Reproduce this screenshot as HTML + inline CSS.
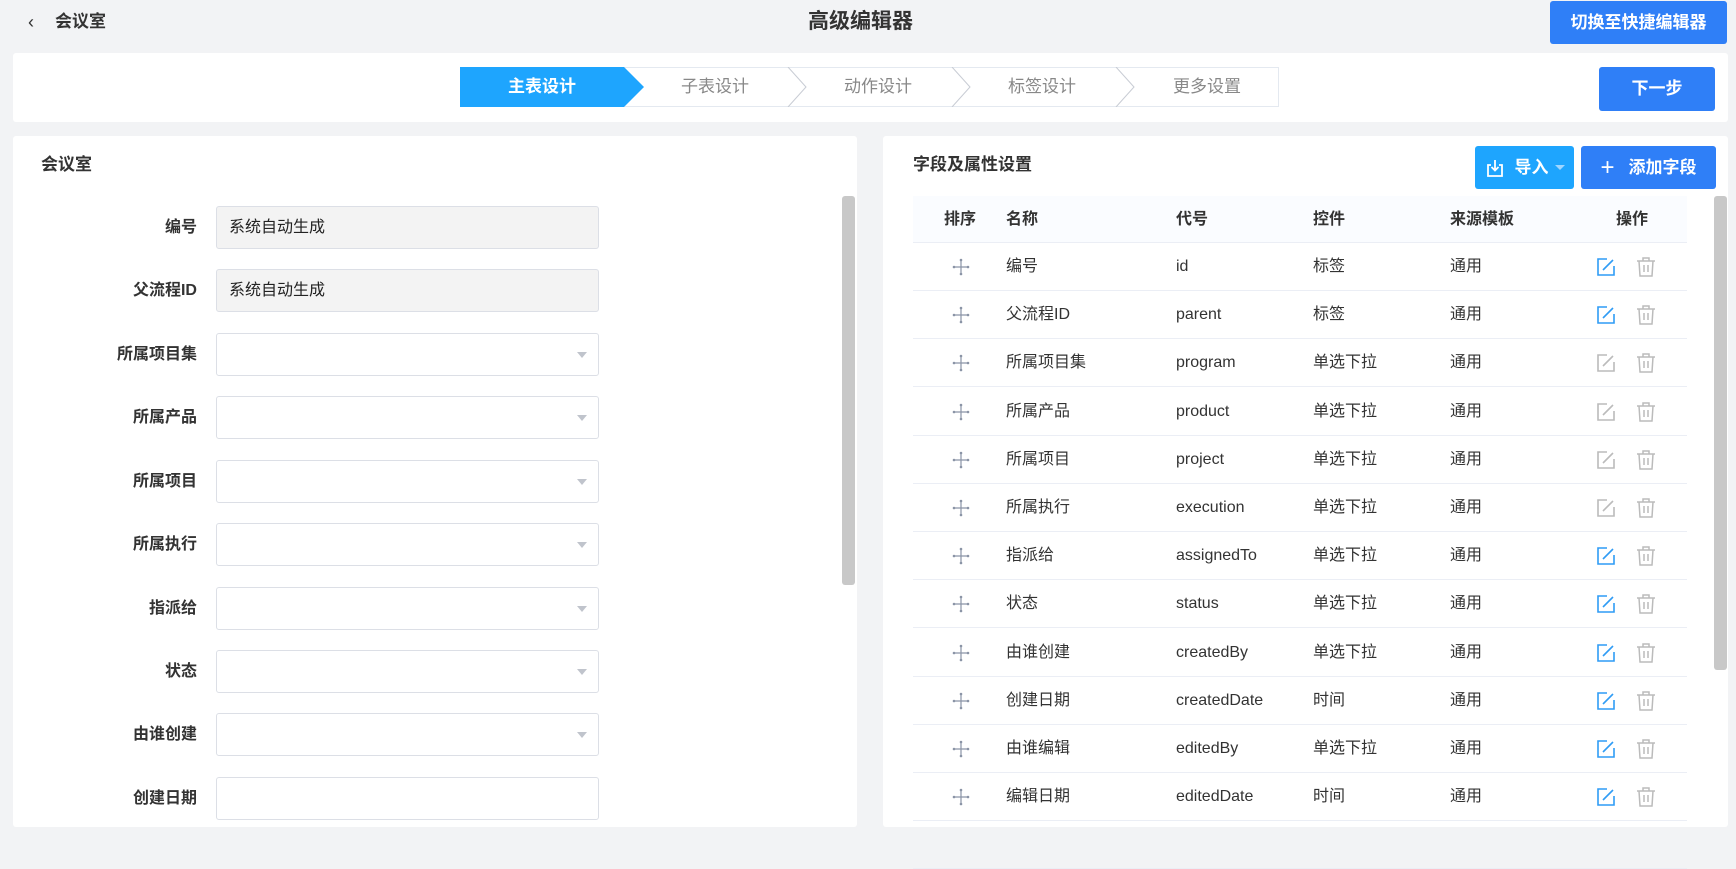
<!DOCTYPE html>
<html><head><meta charset="utf-8"><style>
*{box-sizing:border-box;margin:0;padding:0}
body{width:1736px;height:845px;background:#f2f3f5;font-family:"Liberation Sans","Noto Sans CJK SC",sans-serif;color:#333;position:relative;overflow:hidden;font-size:16px;line-height:20px}
.abs{position:absolute}
.card{position:absolute;background:#fff;border-radius:3px}
.btn{position:absolute;background:#2f7ff7;color:#fff;border-radius:3px;font-size:17px;font-weight:bold;display:flex;align-items:center;justify-content:center}
.lbl{position:absolute;left:47px;width:150px;text-align:right;font-weight:bold;font-size:16px;color:#333;height:43px;line-height:43px}
.inp{position:absolute;left:216px;width:383px;height:43px;border:1px solid #dcdfe6;border-radius:3px;background:#fff}
.inp.ro{background:#f3f3f3}
.inp span{position:absolute;left:12px;top:0;line-height:41px;font-size:16px;color:#222}
.inp i{position:absolute;right:11px;top:18px;width:0;height:0;border-left:5px solid transparent;border-right:5px solid transparent;border-top:6px solid #c0c4cc}
.row{position:absolute;left:913px;width:774px;height:48px;border-bottom:1px solid #ebeef5;font-size:16px;color:#333}
.row div{position:absolute;top:0;line-height:47px}
.step{position:absolute;top:67px;line-height:40px;font-size:17px;color:#888}
</style></head><body>
<div class="abs" style="left:28px;top:12px;font-size:18px;color:#333">‹</div>
<div class="abs" style="left:55px;top:12px;font-size:17px;font-weight:bold">会议室</div>
<div class="abs" style="left:808px;top:10px;font-size:21px;line-height:24px;font-weight:bold;color:#333">高级编辑器</div>
<div class="btn" style="left:1550px;top:1px;width:177px;height:43px">切换至快捷编辑器</div>

<div class="card" style="left:13px;top:53px;width:1715px;height:69px"></div>
<div class="abs" style="left:460px;top:67px;width:819px;height:40px;border:1px solid #e4e9f0;background:#fff"></div>
<svg class="abs" style="left:460px;top:67px" width="819" height="40">
<polygon points="0,0 164,0 184,20 164,40 0,40" fill="#1ea5fe"/>
<polyline points="328,0 346,20 328,40" fill="none" stroke="#c8ccd4"/>
<polyline points="492,0 510,20 492,40" fill="none" stroke="#c8ccd4"/>
<polyline points="656,0 674,20 656,40" fill="none" stroke="#c8ccd4"/>
</svg>
<div class="step" style="left:508px;color:#fff;font-weight:bold">主表设计</div>
<div class="step" style="left:681px">子表设计</div>
<div class="step" style="left:844px">动作设计</div>
<div class="step" style="left:1008px">标签设计</div>
<div class="step" style="left:1173px">更多设置</div>
<div class="btn" style="left:1599px;top:67px;width:116px;height:44px">下一步</div>

<div class="card" style="left:13px;top:136px;width:844px;height:691px"></div>
<div class="abs" style="left:41px;top:155px;font-size:17px;font-weight:bold">会议室</div>
<div class="abs" style="left:842px;top:196px;width:13px;height:389px;background:#c8c8c8;border-radius:3px"></div>

<div class="lbl" style="top:206px">编号</div><div class="inp ro" style="top:206px"><span>系统自动生成</span></div>
<div class="lbl" style="top:269px">父流程ID</div><div class="inp ro" style="top:269px"><span>系统自动生成</span></div>
<div class="lbl" style="top:333px">所属项目集</div><div class="inp" style="top:333px"><i></i></div>
<div class="lbl" style="top:396px">所属产品</div><div class="inp" style="top:396px"><i></i></div>
<div class="lbl" style="top:460px">所属项目</div><div class="inp" style="top:460px"><i></i></div>
<div class="lbl" style="top:523px">所属执行</div><div class="inp" style="top:523px"><i></i></div>
<div class="lbl" style="top:587px">指派给</div><div class="inp" style="top:587px"><i></i></div>
<div class="lbl" style="top:650px">状态</div><div class="inp" style="top:650px"><i></i></div>
<div class="lbl" style="top:713px">由谁创建</div><div class="inp" style="top:713px"><i></i></div>
<div class="lbl" style="top:777px">创建日期</div><div class="inp" style="top:777px"></div>

<div class="card" style="left:883px;top:136px;width:845px;height:691px"></div>
<div class="abs" style="left:913px;top:155px;font-size:17px;font-weight:bold">字段及属性设置</div>
<div class="btn" style="left:1475px;top:146px;width:99px;height:43px;background:#1ea5fe">
<svg width="20" height="20" viewBox="0 0 20 20" style="margin-right:10px"><path d="M6 7H3v11h14V7h-3" fill="none" stroke="#fff" stroke-width="1.8"/><path d="M10 2v10M6.5 9l3.5 3.5L13.5 9" fill="none" stroke="#fff" stroke-width="1.8"/></svg>导入<span style="margin-left:6px;width:0;height:0;border-left:5px solid transparent;border-right:5px solid transparent;border-top:5px solid #9fd6ff"></span></div>
<div class="btn" style="left:1581px;top:146px;width:135px;height:43px"><span style="font-size:24px;font-weight:normal;margin-right:14px;line-height:1">+</span>添加字段</div>
<div class="abs" style="left:1714px;top:196px;width:13px;height:474px;background:#c8c8c8;border-radius:3px"></div>
<div class="abs" style="left:913px;top:196px;width:774px;height:631px;background:#fff"></div>
<div class="row" style="top:196px;height:47px;background:#fafcff;font-weight:bold">
<div style="left:31px">排序</div><div style="left:93px">名称</div><div style="left:263px">代号</div><div style="left:400px">控件</div><div style="left:537px">来源模板</div><div style="left:703px">操作</div></div>
<div id="rows"></div>
<script>
var d=[["编号","id","标签",1],["父流程ID","parent","标签",1],["所属项目集","program","单选下拉",0],["所属产品","product","单选下拉",0],["所属项目","project","单选下拉",0],["所属执行","execution","单选下拉",0],["指派给","assignedTo","单选下拉",1],["状态","status","单选下拉",1],["由谁创建","createdBy","单选下拉",1],["创建日期","createdDate","时间",1],["由谁编辑","editedBy","单选下拉",1],["编辑日期","editedDate","时间",1],["","","",-1]];
var h="";
d.forEach(function(r,i){var t=243+i*48.2;
var c=r[3]==1?"#2f9cf5":"#bbb";
h+='<div class="row" style="top:'+t+'px">';
if(r[3]>=0){
h+='<svg style="position:absolute;left:39px;top:15px" width="18" height="18" viewBox="0 0 18 18"><path d="M9 1v16M1 9h16" stroke="#8a94a6" stroke-width="1.2"/><circle cx="9" cy="2" r="1.3" fill="#8a94a6"/><circle cx="9" cy="16" r="1.3" fill="#8a94a6"/><circle cx="2" cy="9" r="1.3" fill="#8a94a6"/><circle cx="16" cy="9" r="1.3" fill="#8a94a6"/></svg>';
h+='<div style="left:93px">'+r[0]+'</div><div style="left:263px">'+r[1]+'</div><div style="left:400px">'+r[2]+'</div><div style="left:537px">通用</div>';
h+='<svg style="position:absolute;left:683px;top:14px" width="20" height="20" viewBox="0 0 20 20"><path d="M11 2H2v16h16V9" fill="none" stroke="'+c+'" stroke-width="1.6"/><path d="M7 13L17 3" stroke="'+c+'" stroke-width="1.6"/></svg>';
h+='<svg style="position:absolute;left:723px;top:13px" width="20" height="21" viewBox="0 0 20 21"><path d="M1 5h18M7 5V2h6v3M3 5l1 15h12l1-15M8 9v7M12 9v7" fill="none" stroke="#bbb" stroke-width="1.5"/></svg>';}
h+='</div>';});
document.getElementById("rows").innerHTML=h;
</script>
</body></html>
